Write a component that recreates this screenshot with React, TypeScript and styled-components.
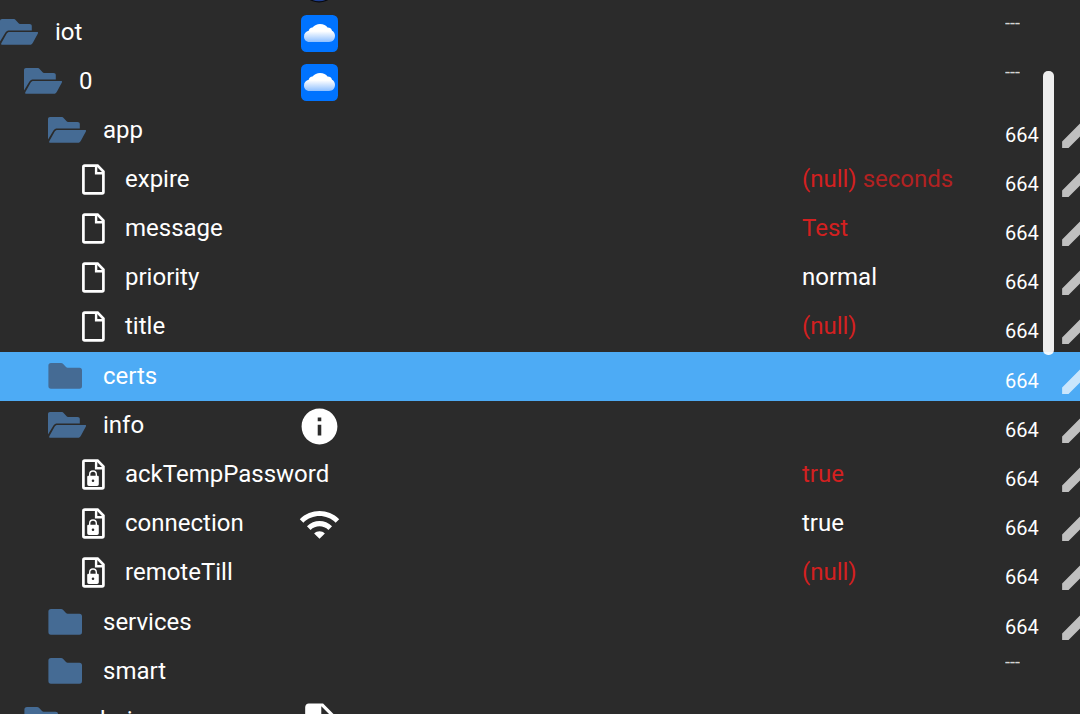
import React from "react";
import styled, { createGlobalStyle } from "styled-components";

const GlobalStyle = createGlobalStyle`
  * { box-sizing: border-box; }
  html, body { margin: 0; background: #2b2b2b; }
  body { font-family: Roboto, "Liberation Sans", sans-serif; color: #fff; }
`;

const Page = styled.main`
  position: relative;
  height: 100vh;
  overflow: hidden;
`;

/* The list is scrolled, so its first row is mostly above the view. */
const Tree = styled.div`
  display: flex;
  flex-direction: column;
  margin-top: -41px;
`;

const Group = styled.div`
  display: flex;
  flex-direction: column;
  padding-bottom: 1px;
`;

const Row = styled.div<{ $selected?: boolean }>`
  display: grid;
  grid-template-columns: 301px 1fr 203px 52px 23px;
  height: 49px;
  background: ${(p) => (p.$selected ? "#4dabf5" : "transparent")};
`;

const NameCell = styled.div<{ $depth: number; $leaf?: boolean }>`
  display: flex;
  align-items: flex-start;
  gap: ${(p) => (p.$leaf ? 20 : 16)}px;
  padding-left: ${(p) => (p.$leaf ? 82 : p.$depth * 24)}px;
  white-space: nowrap;
`;

const Name = styled.span`
  font-size: 24px;
  line-height: 49px;
`;

const FolderSvg = styled.svg`
  flex: none;
  width: 39px;
  height: 26px;
  margin-top: 11px;
  fill: #456b94;
`;

const FileSvg = styled.svg`
  flex: none;
  width: 23px;
  height: 31px;
  margin-top: 9px;
`;

const TypeCell = styled.div`
  padding-top: 7px;
`;

const Logo = styled.svg`
  display: block;
  width: 37px;
  height: 37px;
`;

const Glyph = styled.svg`
  display: block;
  width: 43px;
  height: 43px;
  margin: -3px;
  fill: #fff;
`;

const Value = styled.div<{ $alert?: boolean }>`
  font-size: 24px;
  line-height: 49px;
  white-space: nowrap;
  color: ${(p) => (p.$alert ? "#d32020" : "#fff")};
`;

const Unit = styled.span`
  opacity: 0.8;
`;

const Rights = styled.div<{ $none?: boolean }>`
  font-size: ${(p) => (p.$none ? 18 : 20)}px;
  line-height: ${(p) => (p.$none ? 30 : 58)}px;
  opacity: ${(p) => (p.$none ? 0.8 : 1)};
`;

const EditButton = styled.button`
  width: 41px;
  height: 41px;
  margin: 6px 0 0;
  padding: 0;
  border: 0;
  background: none;
  color: #fff;
  opacity: 0.7;
  cursor: pointer;
  svg { display: block; fill: currentColor; }
`;

const Thumb = styled.div`
  position: absolute;
  top: 71px;
  right: 26px;
  width: 11px;
  height: 284px;
  border-radius: 5px;
  background: rgba(255, 255, 255, 0.92);
`;

const FolderOpen = () => (
  <FolderSvg viewBox="0 0 39 26" aria-hidden="true">
    <path d="M2 0H13.5C14.5 0 15 .3 15.6 .9L18.6 4.2C19 4.7 19.5 4.9 20 4.9H29.5C31 4.9 31.8 5.7 31.8 7V11.4H9.5C7.6 11.4 6.3 12 5.3 13.7L0 22.5V2C0 .8 .8 0 2 0Z" />
    <path d="M9.5 13H37.2C38 13 38.3 13.6 38 14.3L33 23.4C32.2 25 31.2 25.7 29.8 25.7H2.2C1.2 25.7 .9 25 1.3 24.2L6.6 14.8C7.3 13.5 8.2 13 9.5 13Z" />
  </FolderSvg>
);

const FolderClosed = () => (
  <FolderSvg viewBox="0 0 39 26" aria-hidden="true">
    <path d="M3 0H13C14 0 14.6 .3 15.2 .9L18 4C18.5 4.5 19 4.7 19.6 4.7H31.5C33.2 4.7 34 5.6 34 7.2V23C34 24.8 33.2 25.7 31.5 25.7H3C1.2 25.7 .4 24.8 .4 23V2.6C.4 .9 1.3 0 3 0Z" />
  </FolderSvg>
);

const FileIcon = ({ locked }: { locked?: boolean }) => (
  <FileSvg viewBox="0 0 23 31" aria-hidden="true">
    <path d="M2.7 1.6H15.6L21.4 7.6V28.1Q21.4 29.4 20.1 29.4H2.7Q1.4 29.400 1.4 28.1V2.9Q1.4 1.6 2.7 1.6Z" fill="none" stroke="#fff" strokeWidth="2.700" />
    <path d="M14.1 2V9.2H21" fill="none" stroke="#fff" strokeWidth="2.400" />
    {locked && (
      <>
        <path d="M7.700 17.500V15.300A3.300 3.300 0 0 1 14.300 15.300V17.500" fill="none" stroke="#fff" strokeWidth="1.400" />
        <path fillRule="evenodd" fill="#fff" d="M6.300 16.800H15.700Q16.800 16.800 16.800 17.900V25.300Q16.800 27 15.100 27H6.900Q5.200 27 5.200 25.300V17.900Q5.200 16.800 6.300 16.800ZM11 20.500A1.300 1.300 0 1 0 11 23.100A1.300 1.300 0 1 0 11 20.500Z" />
      </>
    )}
  </FileSvg>
);

const CloudLogo = () => (
  <Logo viewBox="0 0 37 37" aria-hidden="true">
    <defs>
      <linearGradient id="cloudFill" x1="0" y1="0" x2="0" y2="1">
        <stop offset="0.4" stopColor="#fff" />
        <stop offset="1" stopColor="#8fc0ff" />
      </linearGradient>
    </defs>
    <rect width="37" height="37" rx="5.5" fill="#0073ff" />
    <path fill="url(#cloudFill)" d="M8.5 27C5 27 3 24.600 3 21.500C3 18.300 5 16.200 7.700 15.700C8 14 9.500 12.700 11.500 12.500C13.500 10.200 16 9 19 9C22.500 9 25.200 10.300 26.500 12.600C28.800 12.500 30.500 13.700 31 15.800C32.800 16.600 34 18.600 34 20.800C34 24.500 31.800 27 28 27Z" />
  </Logo>
);

const RoundLogo = () => (
  <Logo viewBox="0 0 37 37" aria-hidden="true">
    <circle cx="18" cy="18" r="18.500" fill="#08090f" />
    <circle cx="18" cy="18" r="17.300" fill="#1e3f92" />
  </Logo>
);

const InfoIcon = () => (
  <Glyph viewBox="0 0 24 24" aria-hidden="true">
    <path d="M12 2C6.480 2 2 6.480 2 12s4.480 10 10 10 10-4.480 10-10S17.520 2 12 2zm1 15h-2v-6h2v6zm0-8h-2V7h2v2z" />
  </Glyph>
);

const WifiIcon = () => (
  <Glyph viewBox="0 0 24 24" aria-hidden="true">
    <path d="M1 9l2 2c4.970-4.970 13.030-4.970 18 0l2-2C16.930 2.930 7.080 2.930 1 9zm8 8l3 3 3-3c-1.650-1.660-4.340-1.660-6 0zm-4-4l2 2c2.760-2.760 7.240-2.760 10 0l2-2C15.140 9.140 8.870 9.140 5 13z" />
  </Glyph>
);

const DocIcon = () => (
  <Glyph viewBox="0 0 24 24" aria-hidden="true">
    <path d="M6 2c-1.100 0-1.990.9-1.990 2L4 20c0 1.100.89 2 1.990 2H18c1.100 0 2-.9 2-2V8l-6-6H6zm7 7V3.500L18.500 9H13z" />
  </Glyph>
);

interface ItemProps {
  name?: string;
  depth?: number;
  kind?: "open" | "closed" | "file" | "locked";
  icon?: React.ReactNode;
  value?: string;
  unit?: string;
  alert?: boolean;
  rights?: string;
  selected?: boolean;
}

const Item = ({ name, depth = 2, kind, icon, value, unit, alert, rights, selected }: ItemProps) => {
  const leaf = kind === "file" || kind === "locked";
  return (
    <Row role="treeitem" aria-level={depth + 1} aria-selected={!!selected} $selected={selected}>
      <NameCell $depth={depth} $leaf={leaf}>
        {kind === "open" && <FolderOpen />}
        {kind === "closed" && <FolderClosed />}
        {leaf && <FileIcon locked={kind === "locked"} />}
        {name && <Name>{name}</Name>}
      </NameCell>
      <TypeCell>{icon}</TypeCell>
      <Value $alert={alert}>
        {value}
        {unit && <Unit> {unit}</Unit>}
      </Value>
      <Rights $none={rights === "---"}>{rights}</Rights>
      {rights === "664" && (
        <EditButton type="button" aria-label={`Edit ${name}`}>
          <svg width="41" height="41" viewBox="0 0 24 24" aria-hidden="true">
            <path d="M3 17.250V21h3.750L17.810 9.940l-3.750-3.750L3 17.250zM20.710 7.040c.39-.39.39-1.020 0-1.410l-2.340-2.340c-.39-.39-1.020-.39-1.410 0l-1.830 1.830 3.750 3.750 1.830-1.830z" />
          </svg>
        </EditButton>
      )}
    </Row>
  );
};

export default function App() {
  return (
    <Page>
      <GlobalStyle />
      <Tree role="tree" aria-label="Objects">
        <Item depth={0} icon={<RoundLogo />} />
        <Item name="iot" depth={0} kind="open" icon={<CloudLogo />} rights="---" />
        <Item name="0" depth={1} kind="open" icon={<CloudLogo />} rights="---" />
        <Item name="app" kind="open" rights="664" />
        <Group role="group">
          <Item name="expire" depth={3} kind="file" value="(null)" unit="seconds" alert rights="664" />
          <Item name="message" depth={3} kind="file" value="Test" alert rights="664" />
          <Item name="priority" depth={3} kind="file" value="normal" rights="664" />
          <Item name="title" depth={3} kind="file" value="(null)" alert rights="664" />
        </Group>
        <Item name="certs" kind="closed" rights="664" selected />
        <Item name="info" kind="open" icon={<InfoIcon />} rights="664" />
        <Group role="group">
          <Item name="ackTempPassword" depth={3} kind="locked" value="true" alert rights="664" />
          <Item name="connection" depth={3} kind="locked" icon={<WifiIcon />} value="true" rights="664" />
          <Item name="remoteTill" depth={3} kind="locked" value="(null)" alert rights="664" />
        </Group>
        <Item name="services" kind="closed" rights="664" />
        <Item name="smart" kind="closed" rights="---" />
        <Item name="admin" depth={1} kind="closed" icon={<DocIcon />} />
      </Tree>
      <Thumb />
    </Page>
  );
}
